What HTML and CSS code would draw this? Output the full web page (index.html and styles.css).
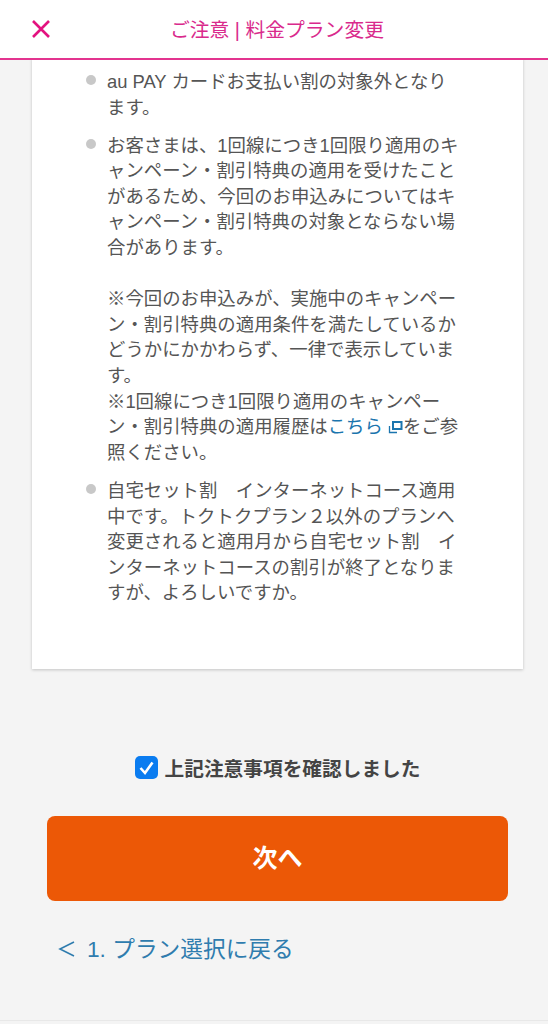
FILE: index.html
```html
<!DOCTYPE html>
<html lang="ja">
<head>
    <meta charset="UTF-8">
    <meta name="viewport" content="width=device-width, initial-scale=1.0">
    <title>ご注意 | 料金プラン変更</title>
    <link rel="stylesheet" href="styles.css">
</head>
<body>
    <header class="header">
        <svg class="close-icon" width="20" height="20" viewBox="0 0 20 20" aria-hidden="true">
            <path d="M2 2 L18 18 M18 2 L2 18" stroke="#e3127f" stroke-width="2.6" fill="none"/>
        </svg>
        <h1 class="header-title">ご注意 | 料金プラン変更</h1>
    </header>

    <main class="main">
        <section class="card">
            <ul class="notes">
                <li>au PAY カードお支払い割の対象外となり<br>ます。</li>
                <li>
                    <p class="para">お客さまは、1回線につき1回限り適用のキ<br>ャンペーン・割引特典の適用を受けたこと<br>があるため、今回のお申込みについてはキ<br>ャンペーン・割引特典の対象とならない場<br>合があります。</p>
                    <p class="para">※今回のお申込みが、実施中のキャンペー<br>ン・割引特典の適用条件を満たしているか<br>どうかにかかわらず、一律で表示していま<br>す。<br>※1回線につき1回限り適用のキャンペー<br>ン・割引特典の適用履歴は<a class="link" href="#">こちら<svg class="ext-icon" width="15" height="14" viewBox="0 0 15 14" aria-hidden="true"><rect x="5" y="2" width="8.5" height="7" fill="none" stroke="#1b75ae" stroke-width="2"/><path d="M1.5 6 V12.5 H9" fill="none" stroke="#1b75ae" stroke-width="1.3"/></svg></a>をご参<br>照ください。</p>
                </li>
                <li>自宅セット割　インターネットコース適用<br>中です。トクトクプラン２以外のプランへ<br>変更されると適用月から自宅セット割　イ<br>ンターネットコースの割引が終了となりま<br>すが、よろしいですか。</li>
            </ul>
        </section>

        <label class="confirm">
            <svg class="check-icon" width="23" height="23" viewBox="0 0 23 23" aria-hidden="true">
                <rect width="23" height="23" rx="5" fill="#0a7cf0"/>
                <path d="M5.5 12 L10 17 L17.5 6.5" stroke="#fff" stroke-width="2.6" fill="none"/>
            </svg>
            <span>上記注意事項を確認しました</span>
        </label>

        <button class="next-btn">次へ</button>

        <a class="back-link" href="#">
            <svg class="back-icon" width="17" height="18" viewBox="0 0 17 18" aria-hidden="true">
                <path d="M16 2 L2 9 L16 16" stroke="#2f7cae" stroke-width="1.6" fill="none"/>
            </svg>
            <span>1. プラン選択に戻る</span>
        </a>
    </main>
    <div class="bottom-edge"></div>
</body>
</html>
```

FILE: styles.css
```css
body {
    margin: 0;
    height: 1024px;
    overflow: hidden;
    background-color: #f4f4f4;
    font-family: "Liberation Sans", "Noto Sans CJK JP", sans-serif;
    color: #555;
}
.header {
    height: 56px;
    background: white;
    border-bottom: 2px solid #e3348f;
    display: flex;
    align-items: center;
    justify-content: center;
    padding: 0 0 2px 6px;
    position: relative;
}
.close-icon {
    position: absolute;
    left: 31px;
    top: 19px;
}
.header-title {
    margin: 0;
    font-size: 19.8px;
    font-weight: 400;
    color: #d92a8c;
}
.main {
    padding: 0 40px 0 47px;
}
.card {
    margin: -2px -15px 0 -15px;
    height: 611px;
    background: white;
    box-shadow: 0 1px 3px rgba(0,0,0,0.2);
    box-sizing: border-box;
    padding: 11px 60px 0 75px;
}
.notes {
    list-style: none;
    margin: 0;
    padding: 0;
    font-size: 18.4px;
    line-height: 25.6px;
    white-space: nowrap;
}
.notes li {
    position: relative;
    margin-bottom: 12.5px;
}
.notes li::before {
    content: "";
    position: absolute;
    left: -21px;
    top: 6px;
    width: 10px;
    height: 10px;
    border-radius: 50%;
    background: #c8c8c8;
}
.para {
    margin: 0 0 25.6px;
}
.para:last-child {
    margin-bottom: 0;
}
.link {
    color: #1b75ae;
    text-decoration: none;
}
.ext-icon {
    margin-left: 5px;
    vertical-align: -1px;
}
.confirm {
    display: flex;
    align-items: center;
    justify-content: center;
    gap: 7px;
    margin-top: 83px;
    height: 30px;
    font-size: 19.7px;
    font-weight: 700;
    color: #444;
}
.next-btn {
    display: block;
    width: 100%;
    height: 85px;
    margin-top: 34px;
    padding: 0 0 6px;
    border: none;
    border-radius: 8px;
    background: #ec5806;
    color: white;
    font-family: inherit;
    font-size: 25px;
    font-weight: 700;
}
.back-link {
    display: flex;
    align-items: center;
    gap: 12px;
    margin-top: 30px;
    padding-left: 11px;
    font-size: 22.7px;
    color: #2f7cae;
    text-decoration: none;
}
.back-icon {
    margin-top: 2px;
}
.bottom-edge {
    margin-top: 56px;
    border-top: 1px solid #e8e8e8;
}
```
